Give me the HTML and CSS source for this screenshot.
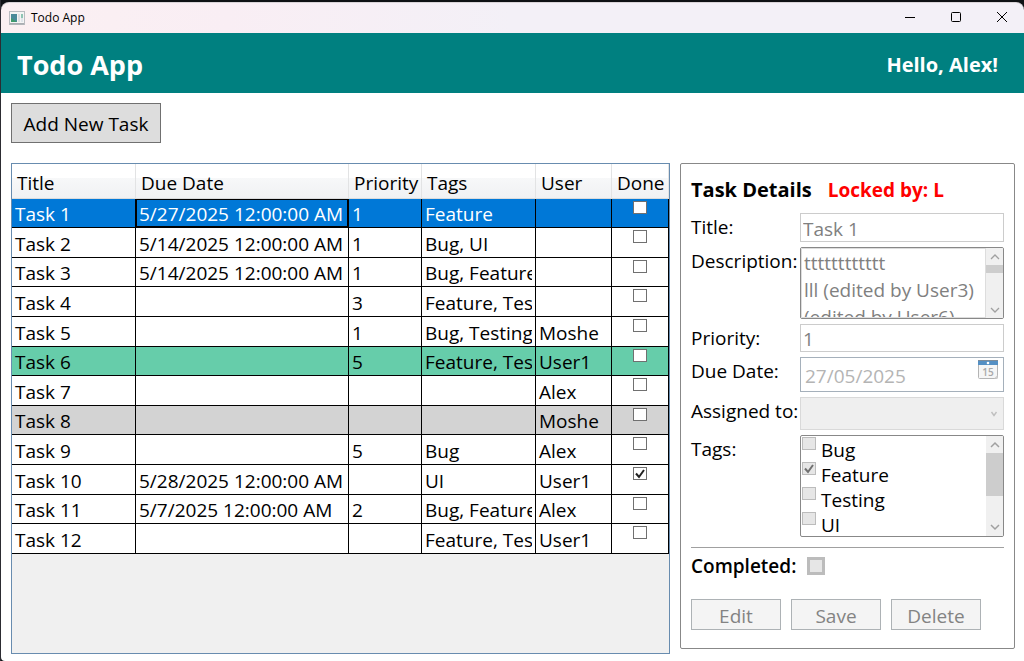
FILE: index.html
```html
<!DOCTYPE html>
<html lang="en">
<head>
<meta charset="utf-8">
<title>Todo App</title>
<meta name="viewport" content="width=device-width, initial-scale=1">
<link rel="stylesheet" href="styles.css">
</head>
<body>
<div class="window">
  <header class="titlebar">
    <svg class="app-icon" width="16" height="14" viewBox="0 0 16 14" aria-hidden="true">
      <rect x="0.5" y="0.5" width="15" height="13" fill="#f4f4f4" stroke="#b9bcc0"/>
      <rect x="1" y="12" width="14" height="1.5" fill="#a9adb2"/>
      <rect x="2" y="3" width="6" height="8" fill="#4a8a99"/>
      <path d="M2 11V7l6 4z" fill="#3f9a6c"/>
      <rect x="9" y="3" width="2" height="8" fill="#dcdfe2"/>
      <rect x="12" y="3" width="2" height="4" fill="#8fc4b4"/>
      <rect x="12" y="7" width="2" height="4" fill="#dfe4ea"/>
    </svg>
    <span class="caption">Todo App</span>
    <div class="window-buttons">
      <button type="button" class="window-button" aria-label="Minimize"><svg width="12" height="12" viewBox="0 0 12 12"><path d="M1 5.500h10" stroke="#000" fill="none"/></svg></button>
      <button type="button" class="window-button" aria-label="Maximize"><svg width="12" height="12" viewBox="0 0 12 12"><rect x="1.5" y="0.5" width="9" height="9" rx="1" stroke="#000" fill="none"/></svg></button>
      <button type="button" class="window-button" aria-label="Close"><svg width="12" height="12" viewBox="0 0 12 12"><path d="M1 0l10 10M11 0L1 10" stroke="#000" fill="none"/></svg></button>
    </div>
  </header>
  <div class="banner">
    <h1 class="brand">Todo App</h1>
    <span class="greeting">Hello, Alex!</span>
  </div>
  <main class="content">
    <button type="button" class="add-button">Add New Task</button>
    <div class="board">
      <section class="grid-panel" aria-label="Tasks">
        <table class="tasks">
          <colgroup><col class="col-title"><col class="col-due"><col class="col-priority"><col><col class="col-user"><col class="col-done"></colgroup>
          <thead>
            <tr><th>Title</th><th>Due Date</th><th>Priority</th><th>Tags</th><th>User</th><th>Done</th></tr>
          </thead>
          <tbody>
            <tr class="selected"><td>Task 1</td><td class="current">5/27/2025 12:00:00 AM</td><td>1</td><td><div class="clip">Feature</div></td><td></td><td class="done"><input type="checkbox" class="check" aria-label="Task 1 done"></td></tr>
            <tr><td>Task 2</td><td>5/14/2025 12:00:00 AM</td><td>1</td><td><div class="clip">Bug, UI</div></td><td></td><td class="done"><input type="checkbox" class="check" aria-label="Task 2 done"></td></tr>
            <tr><td>Task 3</td><td>5/14/2025 12:00:00 AM</td><td>1</td><td><div class="clip">Bug, Feature</div></td><td></td><td class="done"><input type="checkbox" class="check" aria-label="Task 3 done"></td></tr>
            <tr><td>Task 4</td><td></td><td>3</td><td><div class="clip">Feature, Testing</div></td><td></td><td class="done"><input type="checkbox" class="check" aria-label="Task 4 done"></td></tr>
            <tr><td>Task 5</td><td></td><td>1</td><td><div class="clip">Bug, Testing</div></td><td>Moshe</td><td class="done"><input type="checkbox" class="check" aria-label="Task 5 done"></td></tr>
            <tr class="green"><td>Task 6</td><td></td><td>5</td><td><div class="clip">Feature, Testing</div></td><td>User1</td><td class="done"><input type="checkbox" class="check" aria-label="Task 6 done"></td></tr>
            <tr><td>Task 7</td><td></td><td></td><td></td><td>Alex</td><td class="done"><input type="checkbox" class="check" aria-label="Task 7 done"></td></tr>
            <tr class="gray"><td>Task 8</td><td></td><td></td><td></td><td>Moshe</td><td class="done"><input type="checkbox" class="check" aria-label="Task 8 done"></td></tr>
            <tr><td>Task 9</td><td></td><td>5</td><td><div class="clip">Bug</div></td><td>Alex</td><td class="done"><input type="checkbox" class="check" aria-label="Task 9 done"></td></tr>
            <tr><td>Task 10</td><td>5/28/2025 12:00:00 AM</td><td></td><td><div class="clip">UI</div></td><td>User1</td><td class="done"><input type="checkbox" class="check" aria-label="Task 10 done" checked></td></tr>
            <tr><td>Task 11</td><td>5/7/2025 12:00:00 AM</td><td>2</td><td><div class="clip">Bug, Feature</div></td><td>Alex</td><td class="done"><input type="checkbox" class="check" aria-label="Task 11 done"></td></tr>
            <tr><td>Task 12</td><td></td><td></td><td><div class="clip">Feature, Testing</div></td><td>User1</td><td class="done"><input type="checkbox" class="check" aria-label="Task 12 done"></td></tr>
          </tbody>
        </table>
      </section>
      <form class="details">
        <div class="details-head">
          <h2 class="details-title">Task Details</h2>
          <span class="locked">Locked by: L</span>
        </div>
        <div class="fields">
          <label class="label" for="title">Title:</label>
          <input class="text-box" id="title" type="text" value="Task 1" disabled>

          <label class="label" for="description">Description:</label>
          <div class="scroll-box description-box">
            <textarea class="description" id="description" disabled>tttttttttttt
lll (edited by User3)
(edited by User6)</textarea>
            <div class="scrollbar" aria-hidden="true">
              <svg class="arrow" width="10" height="17" viewBox="0 0 10 17"><path d="M1 11l4-4 4 4" fill="none" stroke="#a0a0a0" stroke-width="1.3"/></svg>
              <div class="track"><div class="thumb thumb-small"></div></div>
              <svg class="arrow" width="10" height="17" viewBox="0 0 10 17"><path d="M1 7l4 4 4-4" fill="none" stroke="#a0a0a0" stroke-width="1.3"/></svg>
            </div>
          </div>

          <label class="label" for="priority">Priority:</label>
          <input class="text-box" id="priority" type="text" value="1" disabled>

          <label class="label" for="due">Due Date:</label>
          <div class="date-box">
            <input class="date-input" id="due" type="text" value="27/05/2025" disabled>
            <button type="button" class="date-button" aria-label="Show calendar" disabled>
              <svg width="20" height="19" viewBox="0 0 20 19">
                <rect x="0.5" y="0.5" width="19" height="18" rx="1" fill="#f6f6f6" stroke="#b4b4b4"/>
                <rect x="0" y="1" width="20" height="4" fill="#5590c4"/>
                <path d="M0 0.5h20" stroke="#7d8c9a"/>
                <circle cx="10" cy="3" r="1.3" fill="#fff"/>
                <path d="M16 18.5l3.5-3.5v3.5z" fill="#d0d0d0"/>
                <text class="calendar-day" x="10" y="16" text-anchor="middle">15</text>
              </svg>
            </button>
          </div>

          <label class="label" for="assigned">Assigned to:</label>
          <select class="combo" id="assigned" disabled><option></option></select>

          <span class="label" id="tags-label">Tags:</span>
          <div class="scroll-box" role="group" aria-labelledby="tags-label">
            <ul class="tags">
              <li><label class="tag"><input type="checkbox" class="check" disabled>Bug</label></li>
              <li><label class="tag"><input type="checkbox" class="check" checked disabled>Feature</label></li>
              <li><label class="tag"><input type="checkbox" class="check" disabled>Testing</label></li>
              <li><label class="tag"><input type="checkbox" class="check" disabled>UI</label></li>
            </ul>
            <div class="scrollbar" aria-hidden="true">
              <svg class="arrow" width="10" height="17" viewBox="0 0 10 17"><path d="M1 11l4-4 4 4" fill="none" stroke="#a0a0a0" stroke-width="1.5"/></svg>
              <div class="track"><div class="thumb"></div></div>
              <svg class="arrow" width="10" height="17" viewBox="0 0 10 17"><path d="M1 6l4 4 4-4" fill="none" stroke="#a0a0a0" stroke-width="1.5"/></svg>
            </div>
          </div>
        </div>
        <hr class="divider">
        <div class="completed">
          <label class="completed-label" for="completed">Completed:</label>
          <input type="checkbox" class="check check-large" id="completed" disabled>
        </div>
        <div class="actions">
          <button type="button" class="action" disabled>Edit</button>
          <button type="button" class="action" disabled>Save</button>
          <button type="button" class="action" disabled>Delete</button>
        </div>
      </form>
    </div>
  </main>
</div>
</body>
</html>
```
FILE: styles.css
```css
* {
  box-sizing: border-box;
}

body {
  margin: 0;
  background: #0e1114;
  color: #000;
  font: 19px/28px "Open Sans", "Noto Sans", sans-serif;
}

button,
input,
textarea,
select {
  margin: 0;
  font: inherit;
}

.window {
  display: flex;
  flex-direction: column;
  min-height: 100vh;
  padding-top: 2px;
  border-left: 1px solid #2c2c32;
}

.titlebar {
  display: flex;
  align-items: center;
  height: 31px;
  padding-left: 8px;
  border-top: 1px solid #d9d4d8;
  border-radius: 8px 8px 0 0;
  background: linear-gradient(90deg, #fbf0f2, #f9eef4 22%, #f3f0f7 50%);
}

.caption {
  margin-left: 6px;
  font-size: 12px;
  line-height: 16px;
}

.window-buttons {
  display: flex;
  margin-left: auto;
}

.window-button {
  display: grid;
  place-items: center;
  width: 46px;
  height: 30px;
  padding: 0 0 0 2px;
  border: 0;
  background: none;
}

.banner {
  display: flex;
  align-items: center;
  justify-content: space-between;
  height: 60px;
  padding: 0 26px 0 16px;
  background: #008080;
  color: #fff;
}

.brand {
  margin: 0;
  padding-top: 4px;
  font-size: 27px;
  line-height: 36px;
  font-weight: 700;
}

.greeting {
  padding-top: 3px;
  font-size: 20px;
  font-weight: 700;
}

.content {
  display: flex;
  flex: 1;
  flex-direction: column;
  align-items: flex-start;
  gap: 20px;
  padding: 10px 9px 7px 10px;
  border-bottom-left-radius: 4px;
  background: #fff;
}

.add-button {
  height: 40px;
  width: 150px;
  padding: 2px 0 0;
  border: 1px solid #707070;
  background: #ddd;
  color: #000;
}

.board {
  display: grid;
  flex: 1;
  grid-template-columns: minmax(0, 1fr) 335px;
  gap: 10px;
  width: 100%;
}

.grid-panel {
  border: 1px solid #688caf;
  background: #f0f0f0;
}

.tasks {
  width: 100%;
  table-layout: fixed;
  border-collapse: separate;
  border-spacing: 0;
  white-space: nowrap;
}

.col-title { width: 124px; }
.col-due { width: 213px; }
.col-priority { width: 73px; }
.col-user { width: 76px; }
.col-done { width: 57px; }

.tasks th {
  height: 35px;
  padding: 4px 0 0 5px;
  border-right: 1px solid #e2e3e4;
  border-bottom: 1px solid #d9dbdd;
  background: linear-gradient(#fff 40%, #f7f8f9 41%, #f0f1f3);
  font-weight: 400;
  line-height: 28px;
  text-align: left;
}

.tasks td {
  height: 30px;
  padding: 3px 3px 0;
  border-right: 1px solid #000;
  border-bottom: 1px solid #000;
  background: #fff;
  line-height: 25px;
}

.tasks tbody tr:nth-child(5n + 1) td,
.tasks tbody tr:nth-child(5n + 3) td {
  height: 29px;
}

.tasks .selected td {
  background: #0078d7;
  color: #fff;
}

.tasks .selected .current {
  box-shadow: inset 0 0 0 1px #000;
}

.tasks .green td {
  background: #66cdaa;
}

.tasks .gray td {
  background: #d3d3d3;
}

.clip {
  overflow: hidden;
}

.tasks .done {
  padding-top: 2px;
  line-height: 0;
  text-align: center;
  vertical-align: top;
}

.check {
  appearance: none;
  flex: none;
  width: 14px;
  height: 13px;
  border: 1px solid #707070;
  background: #fff center / 12px 11px no-repeat;
}

.check:checked {
  background-image: url("data:image/svg+xml,%3Csvg xmlns='http://www.w3.org/2000/svg' viewBox='0 0 12 11'%3E%3Cpath d='M2 5.5L5 9L10 2' fill='none' stroke='%23212121' stroke-width='2'/%3E%3C/svg%3E");
}

.check:disabled {
  border-color: #bcbcbc;
  background-color: #e6e6e6;
}

.check:checked:disabled {
  background-image: url("data:image/svg+xml,%3Csvg xmlns='http://www.w3.org/2000/svg' viewBox='0 0 12 11'%3E%3Cpath d='M2 5.5L5 9L10 2' fill='none' stroke='%23707070' stroke-width='2'/%3E%3C/svg%3E");
}

.check-large {
  width: 18px;
  height: 18px;
  border-width: 3px;
}

.details {
  margin-bottom: 5px;
  padding: 10px;
  border: 1px solid #888;
  border-radius: 2px;
}

.details-head {
  display: flex;
  align-items: center;
  gap: 16px;
  height: 32px;
  margin-bottom: 7px;
}

.details-title {
  margin: 0;
  font-size: 20px;
  font-weight: 700;
}

.locked {
  color: #f00;
  font-weight: 700;
}

.fields {
  display: grid;
  grid-template-columns: 109px minmax(0, 1fr);
  grid-template-rows: 29px 72px 28px 35px 33px 102px;
  row-gap: 5px;
}

.label {
  white-space: nowrap;
}

.text-box {
  width: 100%;
  padding: 2px 2px 0;
  border: 1px solid #ccc;
  background: #fff;
  color: #808080;
}

.scroll-box {
  display: flex;
  overflow: hidden;
  border: 1px solid #888;
  border-radius: 2px;
}

.description {
  flex: 1;
  min-width: 0;
  padding: 1px 2px 0;
  overflow: hidden;
  border: 1px solid #ddd;
  background: #fff;
  color: #808080;
  line-height: 27px;
  resize: none;
}

.scrollbar {
  display: flex;
  flex: none;
  flex-direction: column;
  align-items: center;
  width: 17px;
  background: #f0f0f0;
}

.arrow {
  flex: none;
}

.track {
  flex: 1;
  width: 100%;
}

.thumb {
  height: 43px;
  background: #cdcdcd;
}

.thumb-small {
  height: 8px;
}

.date-box {
  display: flex;
  align-items: flex-start;
  padding: 2px 5px 0 2px;
  border: 1px solid #a5b0bb;
}

.date-input {
  flex: 1;
  min-width: 0;
  height: 30px;
  padding: 1px 2px 0;
  border: 0;
  background: #fff;
  color: #b4b4b4;
}

.date-button {
  display: block;
  padding: 0;
  border: 0;
  background: none;
  line-height: 0;
}

.calendar-day {
  fill: #a8a8a8;
  font: 600 10px "Open Sans", sans-serif;
}

.combo {
  width: 100%;
  appearance: none;
  border: 1px solid #d9d9d9;
  border-radius: 0;
  background: #efefef url("data:image/svg+xml,%3Csvg xmlns='http://www.w3.org/2000/svg' viewBox='0 0 8 8'%3E%3Cpath d='M1.5 2L4 5.5L6.500 2' fill='none' stroke='%23bfbfbf' stroke-width='1.400'/%3E%3C/svg%3E") right 5px center / 8px 8px no-repeat;
  opacity: 1;
}

.tags {
  flex: 1;
  margin: 0;
  padding: 1px 0 0 1px;
  list-style: none;
}

.tag {
  display: flex;
  gap: 5px;
  height: 25px;
  line-height: 26px;
}

.divider {
  margin: 10px 0 0;
  border: 0;
  border-top: 1px solid #a0a0a0;
}

.completed {
  display: flex;
  align-items: center;
  gap: 11px;
  height: 36px;
}

.completed-label {
  font-weight: 600;
}

.actions {
  display: flex;
  gap: 10px;
  margin-top: 15px;
}

.action {
  width: 90px;
  height: 31px;
  padding: 2px 0 0;
  border: 1px solid #adb2b5;
  background: #f4f4f4;
  color: #838383;
}
```
